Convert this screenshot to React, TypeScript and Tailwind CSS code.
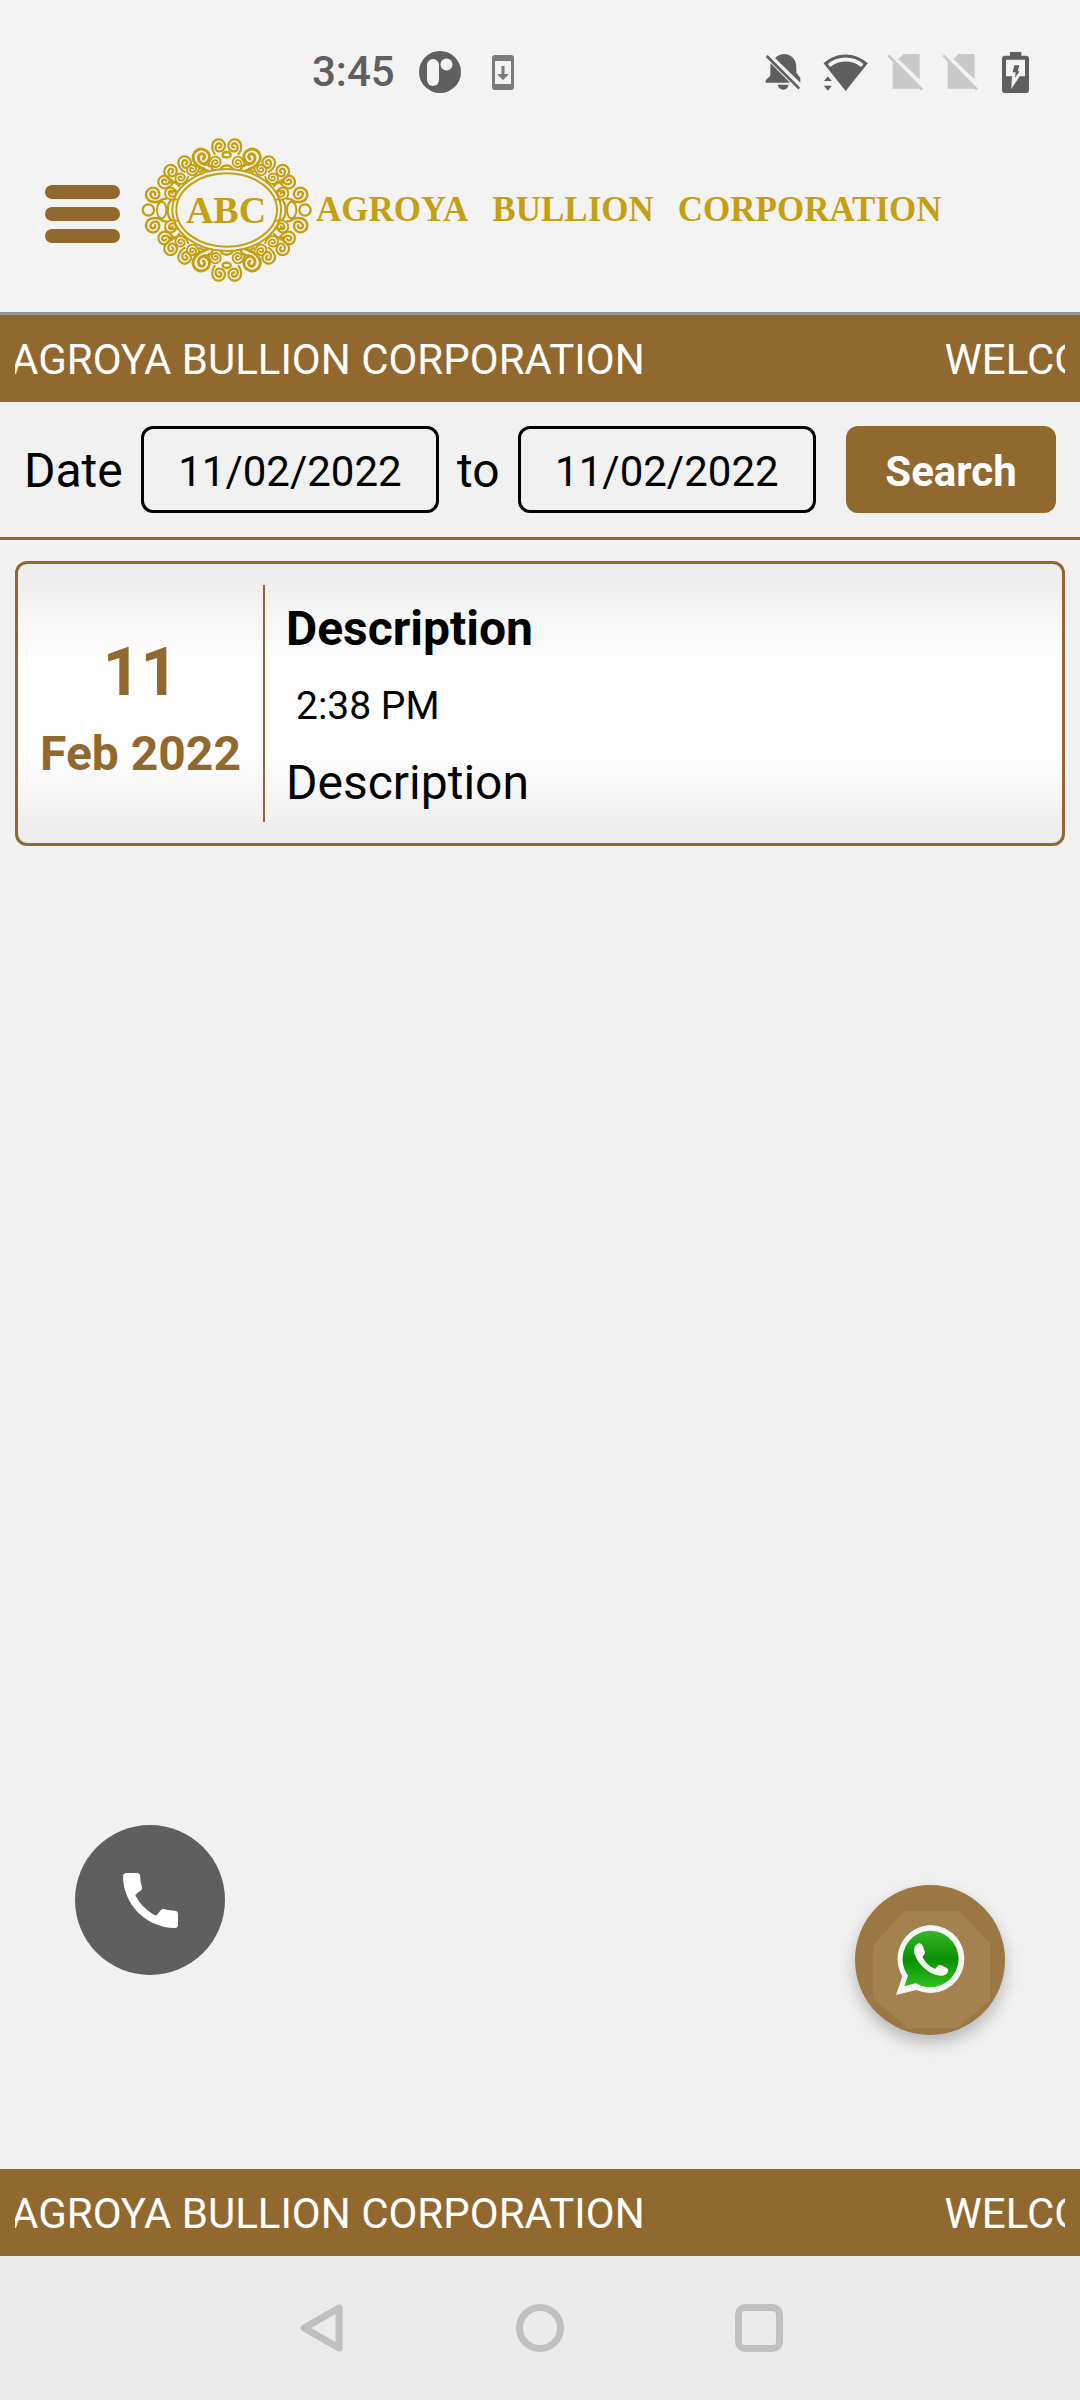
import { useState } from 'react';

interface Curl {
    x: number;
    y: number;
    scale: number;
    rotate: number;
}

const CURLS: Curl[] = [
    { x: 24, y: -193, scale: 0.95, rotate: -10 },
    { x: 76, y: -158, scale: 1.25, rotate: 30 },
    { x: 34, y: -144, scale: 0.8, rotate: -40 },
    { x: 126, y: -142, scale: 0.95, rotate: 15 },
    { x: 103, y: -120, scale: 0.8, rotate: 130 },
    { x: 168, y: -116, scale: 0.95, rotate: 25 },
    { x: 138, y: -94, scale: 0.8, rotate: 120 },
    { x: 186, y: -84, scale: 0.95, rotate: 110 },
    { x: 168, y: -50, scale: 0.85, rotate: 60 },
    { x: 221, y: -46, scale: 1.05, rotate: 70 },
];

const QUADRANTS = ['scale(1 1)', 'scale(-1 1)', 'scale(1 -1)', 'scale(-1 -1)'];

function LogoFrame() {
    return (
        <svg viewBox="0 0 540 456" className="h-[152px] w-[180px]" fill="none" stroke="#c49f10" strokeLinecap="round" aria-hidden="true">
            <g transform="translate(272 228)">
                <ellipse rx="163" ry="123" strokeWidth="6" />
                <ellipse rx="151" ry="110" strokeWidth="6" />
                {QUADRANTS.map((quadrant) => (
                    <g key={quadrant} transform={quadrant} strokeWidth="7">
                        {CURLS.map((curl) => (
                            <path
                                key={`${curl.x}${curl.y}`}
                                transform={`translate(${curl.x} ${curl.y}) rotate(${curl.rotate}) scale(${curl.scale})`}
                                d="M-2 6c-10-2-8-14 2-14a14 14 0 0 1 2 25a18 18 0 0 1-22-17a20 20 0 0 1 40 0c0 12-4 20-12 28"
                            />
                        ))}
                        <path d="M0-158c8 0 12-4 12-8s-4-8-12-8M42-122c4-10 14-16 26-14M56-118c10-4 18-2 24 4M0-134c8 0 14 4 18 10" />
                        <path d="M142-72c8-12 20-14 30-10M150-56c10-4 18 0 22 6M205-22c-6-8-14-12-24-12M168-28c8 8 9 18 9 28" />
                    </g>
                ))}
                <ellipse cx="195" rx="14" ry="25" strokeWidth="6" />
                <ellipse cx="-195" rx="14" ry="25" strokeWidth="6" />
                <circle cx="235" r="17" strokeWidth="7" />
                <circle cx="-235" r="17" strokeWidth="7" />
            </g>
        </svg>
    );
}

function StatusBar() {
    return (
        <div className="flex h-36 items-center justify-between pr-[51px] pl-[312px] text-[#5f5f5f]">
            <div className="flex items-center">
                <span className="text-[42px] leading-[48px] font-medium">3:45</span>
                <svg viewBox="0 0 42 42" className="ml-6 h-[42px] w-[42px]">
                    <circle cx="21" cy="21" r="21" fill="#5f5f5f" />
                    <rect x="8" y="8" width="12" height="27" rx="6" fill="#f3f3f3" />
                    <circle cx="27.500" cy="13.500" r="6" fill="#f3f3f3" />
                </svg>
                <svg viewBox="0 0 22 35" className="ml-[31px] h-[35px] w-[22px]">
                    <path fill="#7a7a7a" fillRule="evenodd" d="M3 0h16q3 0 3 3v29q0 3-3 3H3q-3 0-3-3V3q0-3 3-3zm0 6v23h16V6zM9.500 11h3v8H17l-6 6-6-6h4.500z" />
                </svg>
            </div>
            <div className="flex items-center">
                <svg viewBox="0 0 108 108" className="h-9 w-9" fill="#5f5f5f">
                    <path d="M30 12c16-15 36-15 50-4 13 10 14 22 14 38v10l12 16v14zM17 28l58 58H2v-7l14-14V40zM38 92h33c-2 10-9 15-16 15s-15-5-17-15z" />
                    <path d="M5 6l98 98" stroke="#5f5f5f" strokeWidth="8" />
                </svg>
                <svg viewBox="0 0 135 112" className="ml-[22px] h-[37px] w-[45px]" fill="#5f5f5f">
                    <path fillRule="evenodd" d="M68 112L1 28C40-7 95-7 135 28zM14 30l7 9c30-22 64-22 94 0l7-9C90 4 46 4 14 30z" />
                    <path d="M2 82l12-14 12 14zM2 96h24l-12 15z" />
                </svg>
                {[0, 1].map((slot) => (
                    <svg key={slot} viewBox="0 0 108 114" className="ml-[19px] h-[38px] w-9" fill="#c8c8c8">
                        <path d="M34 18L50 3h48v76zM17 26l81 81H17z" />
                        <path d="M4 7l101 103" stroke="#c8c8c8" strokeWidth="8" />
                    </svg>
                ))}
                <svg viewBox="0 0 81 123" className="ml-6 h-[41px] w-[27px]">
                    <path fill="#5f5f5f" fillRule="evenodd" d="M24 0h34v11h14q9 0 9 9v93q0 10-9 10H9q-9 0-9-10V20q0-9 9-9h15zM12 23v50h18l-2 38 25-38h16V23zM37 40h15l-5 18h6L39 77l2-16H32z" />
                </svg>
            </div>
        </div>
    );
}

function Header() {
    return (
        <header className="flex h-[168px] items-center pb-9 pl-[45px]">
            <button type="button" aria-label="Menu" className="flex w-[75px] flex-col gap-2 pt-2">
                <span className="h-[14px] rounded-full bg-[#91692e]" />
                <span className="h-[14px] rounded-full bg-[#91692e]" />
                <span className="h-[14px] rounded-full bg-[#91692e]" />
            </button>
            <div className="ml-4 flex items-center font-['Liberation_Serif',serif] font-bold whitespace-nowrap text-[#c49f10]">
                <div className="relative">
                    <LogoFrame />
                    <span className="absolute inset-0 flex items-center justify-center text-[38px]">ABC</span>
                </div>
                <h1 className="flex gap-6 text-[35px] leading-[48px]">
                    <span>AGROYA</span>
                    <span>BULLION</span>
                    <span>CORPORATION</span>
                </h1>
            </div>
        </header>
    );
}

function Ticker() {
    return (
        <div className="h-[87px] bg-[#91692e] px-[15px] text-white">
            <div className="flex overflow-hidden text-[42px] leading-[90px] whitespace-nowrap">
                <span className="-ml-1 shrink-0">AGROYA BULLION CORPORATION</span>
                <span className="ml-[300px] shrink-0">WELCOME</span>
            </div>
        </div>
    );
}

function DateFilter() {
    const [from, setFrom] = useState('11/02/2022');
    const [to, setTo] = useState('11/02/2022');
    const labelClass = 'pt-[3px] text-[48px] leading-[84px]';
    const inputClass = 'h-[87px] min-w-0 flex-1 rounded-xl border-3 border-black pt-[3px] text-center text-[42px]';

    return (
        <form className="flex items-center gap-[18px] border-b-3 border-[#91692e] px-6 py-6 text-black" onSubmit={(event) => event.preventDefault()}>
            <label htmlFor="date-from" className={labelClass}>
                Date
            </label>
            <input id="date-from" type="text" className={inputClass} value={from} onChange={(event) => setFrom(event.target.value)} />
            <label htmlFor="date-to" className={labelClass}>
                to
            </label>
            <input id="date-to" type="text" className={inputClass} value={to} onChange={(event) => setTo(event.target.value)} />
            <button type="submit" className="ml-3 h-[87px] w-[210px] rounded-xl bg-[#91692e] pt-[3px] text-[42px] font-bold text-white">
                Search
            </button>
        </form>
    );
}

function NewsCard() {
    return (
        <article className="mx-[15px] mt-[21px] flex rounded-xl border-3 border-[#91692e] bg-[linear-gradient(#ebebeb,#fff_36%,#fff_66%,#ebebeb)] py-[21px]">
            <div className="flex w-[247px] flex-col items-center justify-center border-r-2 border-[#91692e] pt-4 font-bold text-[#91692e]">
                <span className="text-[66px] leading-[84px]">11</span>
                <span className="text-[48px] leading-[78px]">Feb 2022</span>
            </div>
            <div className="flex flex-1 flex-col px-[21px] pt-[5px] text-[48px] text-black">
                <h2 className="leading-[78px] font-bold">Description</h2>
                <time className="pl-[10px] text-[39px] leading-[76px]">2:38 PM</time>
                <p className="leading-[78px]">Description</p>
            </div>
        </article>
    );
}

function WhatsAppIcon() {
    return (
        <svg viewBox="0 0 207 210" className="relative h-[70px] w-[69px]">
            <defs>
                <linearGradient id="whatsapp" x1="0" y1="0" x2="0" y2="1">
                    <stop offset="0" stopColor="#36b52a" />
                    <stop offset="0.5" stopColor="#0a8f02" />
                    <stop offset="1" stopColor="#2fc01f" />
                </linearGradient>
            </defs>
            <path fill="#f7f7f5" d="M104 0a102 102 0 1 1-43 195L0 210l19-56A102 102 0 0 1 104 0z" />
            <path fill="url(#whatsapp)" d="M104 17a85 85 0 1 1-45 158l-34 9 11-32A85 85 0 0 1 104 17z" />
            <path fill="#f7f7f5" d="M64 56c8-4 14 0 17 8l6 18c1 6-7 9-7 15 8 16 20 28 36 34 6-2 10-12 16-12l19 9c7 3 7 10 3 15-8 12-26 11-42 4-25-10-50-36-57-62-3-12 0-23 9-29z" />
        </svg>
    );
}

function FloatingActions() {
    return (
        <>
            <button type="button" aria-label="Call" className="absolute bottom-[194px] left-[75px] flex h-[150px] w-[150px] items-center justify-center rounded-full bg-[#5f5f5f]">
                <svg viewBox="3 3 18 18" className="h-[55px] w-[55px]" fill="white">
                    <path d="M20.010 15.380c-1.230 0-2.420-.2-3.530-.56-.35-.12-.74-.03-1.010.24l-1.570 1.970c-2.830-1.350-5.480-3.900-6.890-6.830l1.950-1.660c.27-.28.35-.67.24-1.020-.37-1.110-.56-2.300-.56-3.530 0-.54-.45-.99-.99-.99H4.190C3.650 3 3 3.240 3 3.990 3 13.280 10.730 21 20.010 21c.71 0 .99-.63.99-1.180v-3.450c0-.54-.45-.99-.99-.99z" />
                </svg>
            </button>
            <button
                type="button"
                aria-label="WhatsApp"
                className="absolute right-[75px] bottom-[134px] flex h-[150px] w-[150px] items-center justify-center rounded-full bg-[#9b7744] shadow-[0_8px_16px_rgba(0,0,0,0.24)]"
            >
                <svg viewBox="0 0 150 150" className="absolute inset-0">
                    <path fill="#a38250" d="M49 26h55l31 32v57l-32 28H53l-35-30V61z" />
                </svg>
                <WhatsAppIcon />
            </button>
        </>
    );
}

function NavigationBar() {
    return (
        <nav className="flex h-36 items-center justify-center gap-[171px] bg-[#ebebeb]">
            <button type="button" aria-label="Back">
                <svg viewBox="0 0 48 48" className="h-12 w-12" fill="none" stroke="#c0c0c0" strokeWidth="7" strokeLinejoin="round">
                    <path d="M42 4v40L7 24z" />
                </svg>
            </button>
            <button type="button" aria-label="Home">
                <svg viewBox="0 0 48 48" className="h-12 w-12" fill="none" stroke="#c0c0c0" strokeWidth="7">
                    <circle cx="24" cy="24" r="20.500" />
                </svg>
            </button>
            <button type="button" aria-label="Recent apps">
                <svg viewBox="0 0 48 48" className="h-12 w-12" fill="none" stroke="#c0c0c0" strokeWidth="7">
                    <rect x="3.500" y="3.500" width="41" height="41" rx="7" />
                </svg>
            </button>
        </nav>
    );
}

export default function App() {
    return (
        <div className="flex min-h-screen flex-col bg-[#f1f1f1] font-[Roboto,sans-serif]">
            <div className="border-b-3 border-[#979790] bg-[#f3f3f3]">
                <StatusBar />
                <Header />
            </div>
            <Ticker />
            <main className="relative flex-1">
                <DateFilter />
                <NewsCard />
                <FloatingActions />
            </main>
            <Ticker />
            <NavigationBar />
        </div>
    );
}
